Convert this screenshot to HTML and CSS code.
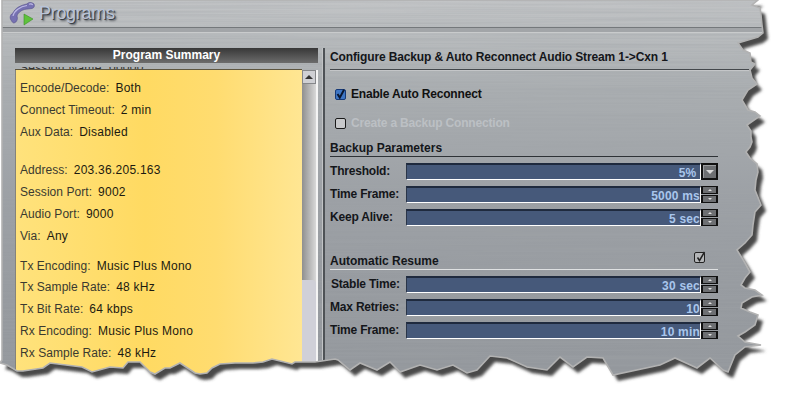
FILE: index.html
```
<!DOCTYPE html>
<html lang="en">
<head>
<meta charset="utf-8">
<title>Programs</title>
<link rel="stylesheet" href="styles.css">
</head>
<body>
<div class="page">
  <svg class="texture" width="785" height="401" aria-hidden="true">
    <filter id="brush" x="0" y="0" width="100%" height="100%">
      <feTurbulence type="fractalNoise" baseFrequency="0.004 0.55" numOctaves="2" seed="7"/>
      <feColorMatrix type="matrix" values="0 0 0 0 0.35  0 0 0 0 0.37  0 0 0 0 0.39  0.8 0 0 0 -0.28"/>
    </filter>
    <rect width="785" height="401" filter="url(#brush)"/>
  </svg>

  <div class="window">
    <header class="titlebar">
      <svg class="logo" width="26" height="26" viewBox="0 0 26 26" aria-hidden="true">
        <path d="M2 20C0 17 2 14 4 13C6 8 12 5 18 4C19 2 23 2 25 4C26 6 25 8 23 8.500L19 9C14 9 9 12 8 16C9 19 8 22 5 23C4 23 3 22 2 20Z" fill="#7671b2" stroke="#55518a" stroke-width=".6"/>
        <path d="M4 16C5 11 11 6.500 18 5.500M20 4.200C21.500 3.600 23 4 23.800 5" fill="none" stroke="#bcb9e4" stroke-width="1.200"/>
        <path d="M15 14l9 5-9 6z" fill="#5fc23c" stroke="#3d8f28" stroke-width=".6"/>
      </svg>
      <h1 class="apptitle">Programs</h1>
    </header>
    <div class="titlerule"></div>

    <main class="main">
      <section class="summary">
        <h2 class="summary-head">Program Summary</h2>
        <div class="peek"><span>Session Name: 00000</span></div>
        <div class="summary-body">
          <div class="list">
            <div class="group first">
              <p class="item"><span>Encode/Decode:</span><b>Both</b></p>
              <p class="item"><span>Connect Timeout:</span><b>2 min</b></p>
              <p class="item"><span>Aux Data:</span><b>Disabled</b></p>
            </div>
            <div class="group wide">
              <p class="item"><span>Address:</span><b>203.36.205.163</b></p>
              <p class="item"><span>Session Port:</span><b>9002</b></p>
              <p class="item"><span>Audio Port:</span><b>9000</b></p>
              <p class="item"><span>Via:</span><b>Any</b></p>
            </div>
            <div class="group">
              <p class="item"><span>Tx Encoding:</span><b>Music Plus Mono</b></p>
              <p class="item"><span>Tx Sample Rate:</span><b>48 kHz</b></p>
              <p class="item"><span>Tx Bit Rate:</span><b>64 kbps</b></p>
              <p class="item"><span>Rx Encoding:</span><b>Music Plus Mono</b></p>
              <p class="item"><span>Rx Sample Rate:</span><b>48 kHz</b></p>
            </div>
          </div>
          <div class="scrollbar">
            <div class="scroll-up"><i></i></div>
            <div class="scroll-track"></div>
            <div class="scroll-thumb"></div>
          </div>
        </div>
      </section>

      <section class="config">
        <h2 class="config-title">Configure Backup &amp; Auto Reconnect Audio Stream 1-&gt;Cxn 1</h2>
        <div class="check enabled">
          <span class="box on"><svg width="11" height="11" viewBox="0 0 11 11"><path d="M2.500 5l2.300 3.600L9 .8" fill="none" stroke="#0b1730" stroke-width="2"/></svg></span>
          Enable Auto Reconnect
        </div>
        <div class="check disabled"><span class="box"></span>Create a Backup Connection</div>

        <div class="params">
          <h3 class="params-head">Backup Parameters</h3>
          <div class="row"><label>Threshold:</label><div class="field">5%&nbsp;</div><div class="drop"><i></i></div></div>
          <div class="row"><label>Time Frame:</label><div class="field">5000 ms</div><div class="spin"><span><i></i></span><span><i></i></span></div></div>
          <div class="row"><label>Keep Alive:</label><div class="field">5 sec</div><div class="spin"><span><i></i></span><span><i></i></span></div></div>
        </div>

        <div class="params resume">
          <h3 class="params-head">Automatic Resume
            <span class="mini"><svg width="13" height="13" viewBox="0 0 13 13"><path d="M3.500 6.500l2 3L10.500 1" fill="none" stroke="#222" stroke-width="1.500"/></svg></span>
          </h3>
          <div class="row"><label class="inset">Stable Time:</label><div class="field">30 sec</div><div class="spin"><span><i></i></span><span><i></i></span></div></div>
          <div class="row"><label>Max Retries:</label><div class="field">10</div><div class="spin"><span><i></i></span><span><i></i></span></div></div>
          <div class="row"><label>Time Frame:</label><div class="field">10 min</div><div class="spin"><span><i></i></span><span><i></i></span></div></div>
        </div>
      </section>
    </main>
  </div>

  <svg class="tear" width="785" height="401" aria-hidden="true">
    <defs>
      <path id="edge" d="M2 0L758 0 752 5 760 8 761 15 762 25 763 33 758 37 738 43 743 50 750 53 751 62 755 64 750 70 752 78 757 84 748 90 742 100 748 110 755 112 760 116 747 125 751 131 751 137 752 142 750 147 746 152 750 158 757 164 758 172 756 180 755 190 761 205 755 212 753 225 752 235 745 243 737 250 742 258 745 263 750 272 745 278 741 285 745 288 755 290 762 295 752 297 742 303 741 308 750 312 758 315 755 325 745 332 738 336 745 342 761 345 745 347 735 355 728 372 723 370 710 358 697 368 675 358 660 365 613 375 603 358 587 357 573 367 560 357 547 370 527 367 507 358 490 356 477 370 467 373 453 365 437 370 420 365 400 372 390 362 377 370 360 363 350 370 338 360 335 359 315 362 295 362 292 364 272 359 263 362 253 363 235 363 220 364 212 368 207 373 200 374 195 373 180 363 170 368 165 368 155 374 150 372 140 362 128 362 123 368 110 367 92 372 82 367 50 363 43 368 23 371 17 371 7 365 0 363 2 360Z"/>
      <clipPath id="outside"><path clip-rule="evenodd" d="M0 0H785V401H0ZM2 0L758 0 752 5 760 8 761 15 762 25 763 33 758 37 738 43 743 50 750 53 751 62 755 64 750 70 752 78 757 84 748 90 742 100 748 110 755 112 760 116 747 125 751 131 751 137 752 142 750 147 746 152 750 158 757 164 758 172 756 180 755 190 761 205 755 212 753 225 752 235 745 243 737 250 742 258 745 263 750 272 745 278 741 285 745 288 755 290 762 295 752 297 742 303 741 308 750 312 758 315 755 325 745 332 738 336 745 342 761 345 745 347 735 355 728 372 723 370 710 358 697 368 675 358 660 365 613 375 603 358 587 357 573 367 560 357 547 370 527 367 507 358 490 356 477 370 467 373 453 365 437 370 420 365 400 372 390 362 377 370 360 363 350 370 338 360 335 359 315 362 295 362 292 364 272 359 263 362 253 363 235 363 220 364 212 368 207 373 200 374 195 373 180 363 170 368 165 368 155 374 150 372 140 362 128 362 123 368 110 367 92 372 82 367 50 363 43 368 23 371 17 371 7 365 0 363 2 360Z"/></clipPath>
      <filter id="soft" x="-5%" y="-5%" width="110%" height="110%"><feGaussianBlur stdDeviation="1.500"/></filter>
    </defs>
    <rect class="paper" width="785" height="401" clip-path="url(#outside)"/>
    <g clip-path="url(#outside)"><use href="#edge" class="shade" transform="translate(5 6)" filter="url(#soft)"/></g>
    <use href="#edge" class="rim"/>
  </svg>
</div>
</body>
</html>
```

FILE: styles.css
```
* { box-sizing: border-box; }
html, body { margin: 0; padding: 0; background: #fff; }
body { font-family: "Liberation Sans", Arial, sans-serif; font-size: 12px; color: #111; }
h1, h2, h3, p { margin: 0; font-weight: inherit; font-size: inherit; }

.page {
  position: relative;
  width: 785px;
  height: 401px;
  overflow: hidden;
  background: linear-gradient(180deg, #c2c4c6 0, #babdbf 30px, #aaaeb1 90px, #9ca0a5 200px, #969a9f 300px, #93979c 401px);
}
.texture, .tear { position: absolute; left: 0; top: 0; }
.tear { z-index: 2; }
.paper { fill: #fff; }
.shade { fill: #4a4a4a; }
.rim { fill: none; stroke: #b2b2b2; stroke-width: 1.6; }

.window { position: relative; z-index: 1; height: 401px; display: flex; flex-direction: column; }

.titlebar { height: 27px; display: flex; align-items: flex-start; padding-left: 9px; }
.logo { flex: none; }
.apptitle {
  font-size: 18px;
  line-height: 27px;
  margin-left: 4px;
  letter-spacing: -0.3px;
  color: #b9c4d8;
  text-shadow: 1px 1px 0 #3c4046, 2px 2px 2px #50545a;
}
.titlerule { height: 6px; border-top: 1px solid #74787b; border-bottom: 1px solid #c9cbcc; background: #a2a5a8; }

.main { flex: 1; display: flex; padding: 15px 0 0 15px; min-height: 0; }

.summary { width: 303px; display: flex; flex-direction: column; }
.summary-head {
  height: 15px;
  line-height: 15px;
  text-align: center;
  font-weight: bold;
  color: #fff;
  background: linear-gradient(180deg, #383838, #6c6c6c);
}
.peek { height: 3px; margin-top: 4px; overflow: hidden; line-height: 3px; padding-left: 5px; color: #333; border-bottom: 1px solid #5e5640; margin-right: 16px; letter-spacing: 0.3px; }
.summary-body { flex: 1; display: flex; min-height: 0; }
.list {
  width: 287px;
  padding: 7px 0 0 4px;
  border-left: 1px solid #85837a;
  overflow: hidden;
  background: linear-gradient(90deg, #ffe27c 0, #ffda62 45%, #ffdc70 70%, #ffe693 100%);
}
.group { margin-top: 8px; }
.group.first { margin-top: 0; }
.group.wide { margin-top: 17px; }
.item { height: 21.8px; line-height: 22px; letter-spacing: 0.05px; white-space: nowrap; color: #3a3a30; }
.item b { font-weight: normal; letter-spacing: 0.25px; color: #1c1a10; margin-left: 6px; }

.scrollbar { width: 16px; position: relative; display: flex; flex-direction: column; background: linear-gradient(90deg, #8f8f8f, #d8d8d8); border-right: 2px solid #f4f4f4; }
.scroll-up { height: 14px; background: #cfd0d4; border: 1px solid #85878a; display: flex; align-items: center; justify-content: center; }
.scroll-up i { border: 4px solid transparent; border-top: 0; border-bottom: 4px solid #333; }
.scroll-track { flex: 1; }
.scroll-thumb { position: absolute; left: 0; right: 0; top: 210px; bottom: 0; background: #d0d0d8; border-radius: 0 4px 0 0; }

.config {
  width: 426px;
  margin-left: 5px;
  padding-left: 5px;
  border-left: 2px solid #4e5256;
  box-shadow: -1px 0 0 #c2c4c6;
}
.config-title { height: 22px; line-height: 18px; font-weight: bold; letter-spacing: -0.13px; white-space: nowrap; border-bottom: 1px solid #44484c; box-shadow: 0 1px 0 #c4c6c8; color: #14161a; }

.check { height: 16px; line-height: 16px; display: flex; align-items: center; gap: 5px; font-weight: bold; letter-spacing: -0.18px; padding-left: 5px; }
.enabled { margin-top: 16px; color: #111; }
.disabled { margin-top: 13px; color: #bcc0c4; }
.box { width: 11px; height: 11px; flex: none; border: 1px solid #1a1a1a; border-radius: 2px; background: #c8c9cb; display: block; }
.box.on { background: #3f76c4; border-color: #173a78; }
.box svg { display: block; margin: -1px; }

.params { width: 388px; margin-top: 9px; }
.params.resume { margin-top: 27px; }
.params-head { position: relative; height: 17px; line-height: 16px; font-weight: bold; border-bottom: 1px solid #2e3236; color: #14161a; margin-bottom: 6px; }
.resume .params-head { border-bottom-color: #dfe1e2; }
.mini { position: absolute; left: 364px; top: -1px; width: 11px; height: 11px; border: 1px solid #222; border-radius: 2px; background: #b4b6b8; }
.mini svg { display: block; margin: -2px 0 0 -1px; }

.row { display: flex; height: 17px; margin-bottom: 6px; }
.row label { width: 76px; flex: none; line-height: 17px; font-weight: bold; letter-spacing: -0.2px; color: #14161a; white-space: nowrap; }
.row label.inset { padding-left: 1px; }
.field {
  flex: 1;
  line-height: 16px;
  text-align: right;
  font-weight: bold;
  font-size: 12px;
  letter-spacing: 0.2px;
  color: #a9c6ec;
  background: #46597a;
  border-top: 2px solid #1f2a3e;
  border-bottom: 1px solid #fff;
  border-right: 1px solid #fff;
  border-left: 1px solid #2a3548;
}
.drop { width: 17px; flex: none; border: 2px solid #111; background: #6d6f72; box-shadow: inset 1px 1px 0 #9a9c9e; display: flex; align-items: center; justify-content: center; }
.drop i { border: 4px solid transparent; border-bottom: 0; border-top: 4px solid #d8d8d8; }
.spin { width: 17px; flex: none; display: flex; flex-direction: column; gap: 1px; }
.spin span { flex: 1; border: 1px solid #111; border-width: 1px 2px; background: #6d6f72; display: flex; align-items: center; justify-content: center; }
.spin i { border: 2px solid transparent; border-top: 0; border-bottom: 2px solid #e0e0e0; }
.spin span + span i { border-bottom: 0; border-top: 2px solid #e0e0e0; }
```
